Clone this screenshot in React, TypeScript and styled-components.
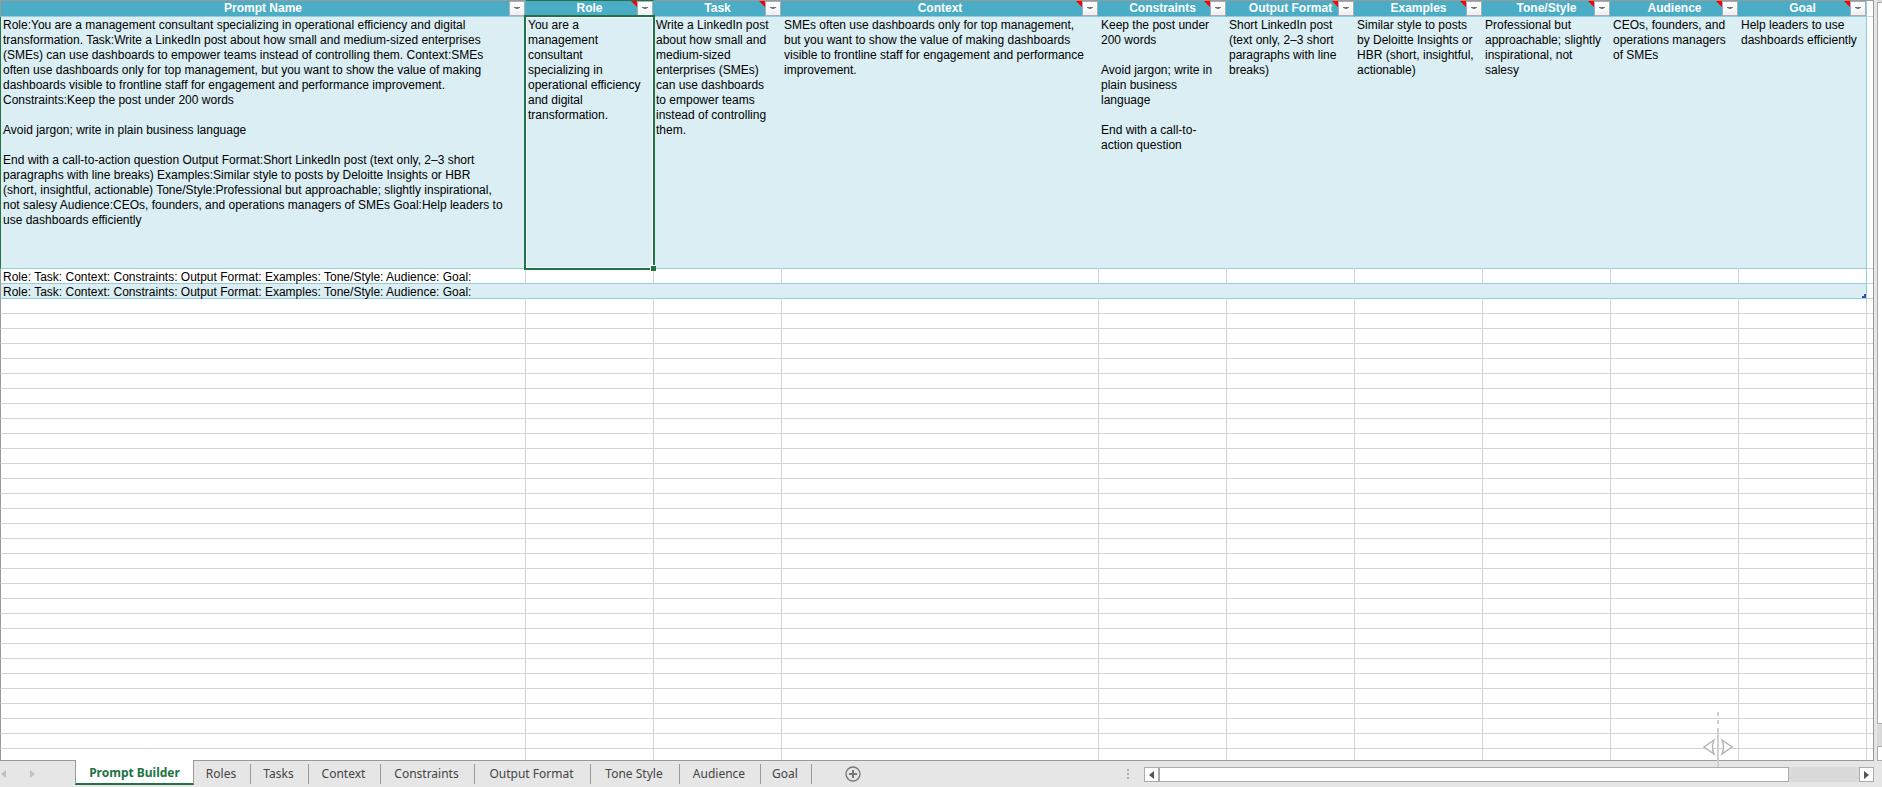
import React from "react";
import styled, { createGlobalStyle } from "styled-components";

const GlobalStyle = createGlobalStyle`
  * { box-sizing: border-box; }
  html, body { margin: 0; padding: 0; }
  body { overflow: hidden; background: #e6e6e6; }
`;

const Page = styled.div`
  display: flex;
  flex-direction: column;
  height: 100vh;
  background: #e6e6e6;
  font-family: "Liberation Sans", Arial, sans-serif;
`;

const Workspace = styled.main`
  position: relative;
  display: flex;
  flex: 1;
  min-height: 0;
`;

const Sheet = styled.div`
  flex: 1;
  min-width: 0;
  overflow: hidden;
  background: #fff;
  border: solid #999;
  border-width: 0 1px 1px 0;
`;

const Grid = styled.table`
  width: 100%;
  table-layout: fixed;
  border-collapse: separate;
  border-spacing: 0;
  font-size: 12px;
  line-height: 15px;
  color: #000;

  th:first-child,
  td:first-child {
    border-left: 1px solid #999;
  }

  tr:first-child td:first-child[data-active-row] {
    border-left-color: #217346;
  }
`;

const HeaderCell = styled.th<{ $selected?: boolean; $edge?: boolean }>`
  position: relative;
  height: 17px;
  padding: 0;
  line-height: 15px;
  font-weight: bold;
  text-align: center;
  color: #fff;
  background: #4bacc6;
  border-top: 1px solid ${(p) => (p.$selected ? "#217346" : "#999")};
  border-bottom: 1px solid #92cddc;
  border-right: 1px solid ${(p) => (p.$edge ? "#92cddc" : "#4bacc6")};
`;

const FilterButton = styled.button`
  position: absolute;
  right: 0;
  top: 0;
  display: flex;
  align-items: center;
  justify-content: center;
  width: 16px;
  height: 15px;
  padding: 0;
  background: linear-gradient(#fff, #eef0f4);
  border: 1px solid #a9adb5;
`;

const NoteMark = styled.svg`
  position: absolute;
  right: 16px;
  top: 0;
`;

type CellKind = "banded" | "plain" | "blank";

const Cell = styled.td<{ $kind: CellKind; $edge?: boolean }>`
  position: relative;
  height: 15px;
  padding: 0 0 0 2px;
  vertical-align: top;
  white-space: pre;
  line-height: 14px;
  background: ${(p) => (p.$kind === "banded" ? "#daeef3" : "#fff")};
  border-bottom: 1px solid ${(p) => (p.$kind === "blank" ? "#d4d4d4" : "#92cddc")};
  border-right: 1px solid
    ${(p) => (p.$edge ? "#92cddc" : p.$kind === "banded" ? "#daeef3" : "#d4d4d4")};
`;

const TallCell = styled(Cell)`
  height: 252px;
  padding-top: 1px;
  line-height: 15px;
`;

const SlimCell = styled(Cell)`
  padding-top: 2px;
  line-height: 12px;
`;

const RestCell = styled.td<{ $top?: boolean }>`
  padding: 0;
  border-top: ${(p) => (p.$top ? "1px solid #999" : "0")};
  border-bottom: 1px solid #d4d4d4;
`;

const Selection = styled.div`
  position: absolute;
  inset: -2px;
  border: 2px solid #217346;
  box-shadow: inset 0 0 0 1px #fff;
  pointer-events: none;
  z-index: 2;
`;

const FillHandle = styled.span`
  position: absolute;
  right: -3px;
  bottom: -3px;
  width: 6px;
  height: 6px;
  background: #217346;
  border-top: 1px solid #fff;
  border-left: 1px solid #fff;
`;

const TableCorner = styled.svg`
  position: absolute;
  right: 0;
  bottom: 0;
`;

const SplitCursor = styled.svg`
  position: absolute;
  right: 149px;
  bottom: -6px;
  z-index: 3;
  pointer-events: none;
`;

const VerticalBar = styled.div`
  display: flex;
  flex-direction: column;
  width: 5px;
  margin-left: 3px;
  padding-top: 2px;
  background: #dadada;
`;

const VerticalThumb = styled.div`
  flex: 1;
  background: #fff;
  border: 1px solid #ababab;
  border-right: 0;
`;

const DownButton = styled.button`
  height: 15px;
  margin-top: 22px;
  padding: 0;
  background: #fff;
  border: 1px solid #ababab;
  border-right: 0;
`;

const Footer = styled.footer`
  display: flex;
  height: 26px;
  padding-right: 8px;
  font-family: "Noto Sans", "Open Sans", sans-serif;
  font-size: 12px;
  color: #444;
`;

const TabArrows = styled.div`
  display: flex;
  align-items: center;
  width: 75px;
  gap: 24px;
  padding-left: 1px;
`;

const ArrowButton = styled.button`
  display: flex;
  padding: 0;
  border: 0;
  background: none;
`;

const Tabs = styled.nav`
  display: flex;
  align-items: flex-start;
`;

const ActiveTab = styled.button`
  width: 119px;
  height: 25px;
  margin-top: -1px;
  padding: 3px 0 0;
  font: bold 12px/20px "Noto Sans", "Open Sans", sans-serif;
  color: #217346;
  background: #fff;
  border: solid #999;
  border-width: 0 1px;
  border-bottom: 2px solid #217346;
  z-index: 1;
`;

const Tab = styled.button<{ $width: number }>`
  width: ${(p) => p.$width}px;
  height: 20px;
  margin-top: 3px;
  padding: 0 2px 0 0;
  font: 12px/20px "Noto Sans", "Open Sans", sans-serif;
  color: #444;
  background: none;
  border: 0;
  border-right: 1px solid #999;
`;

const AddButton = styled.button`
  display: flex;
  align-items: center;
  margin-left: 33px;
  padding: 0;
  border: 0;
  background: none;
`;

const Grip = styled.div`
  display: grid;
  align-content: center;
  gap: 2px;
  width: 2px;
  margin: 0 15px 0 auto;
`;

const GripDot = styled.span`
  width: 2px;
  height: 2px;
  background: #b0b0b0;
`;

const HorizontalBar = styled.div`
  display: flex;
  width: 730px;
  height: 15px;
  margin-top: 6px;
  background: #dadada;
`;

const ScrollButton = styled.button`
  display: flex;
  align-items: center;
  justify-content: center;
  width: 15px;
  padding: 0;
  background: #fff;
  border: 1px solid #ababab;
`;

const HorizontalThumb = styled.div`
  flex: 1;
  margin-right: 70px;
  background: #fff;
  border: 1px solid #ababab;
`;

const columns = [
  { name: "Prompt Name", width: 526, note: false },
  { name: "Role", width: 128, note: true },
  { name: "Task", width: 128, note: true },
  { name: "Context", width: 317, note: true },
  { name: "Constraints", width: 128, note: true },
  { name: "Output Format", width: 128, note: true },
  { name: "Examples", width: 128, note: true },
  { name: "Tone/Style", width: 128, note: true },
  { name: "Audience", width: 128, note: true },
  { name: "Goal", width: 128, note: true },
];

const firstPrompt = [
  `Role:You are a management consultant specializing in operational efficiency and digital
transformation. Task:Write a LinkedIn post about how small and medium-sized enterprises
(SMEs) can use dashboards to empower teams instead of controlling them. Context:SMEs
often use dashboards only for top management, but you want to show the value of making
dashboards visible to frontline staff for engagement and performance improvement.
Constraints:Keep the post under 200 words

Avoid jargon; write in plain business language

End with a call-to-action question Output Format:Short LinkedIn post (text only, 2–3 short
paragraphs with line breaks) Examples:Similar style to posts by Deloitte Insights or HBR
(short, insightful, actionable) Tone/Style:Professional but approachable; slightly inspirational,
not salesy Audience:CEOs, founders, and operations managers of SMEs Goal:Help leaders to
use dashboards efficiently`,
  `You are a
management
consultant
specializing in
operational efficiency
and digital
transformation.`,
  `Write a LinkedIn post
about how small and
medium-sized
enterprises (SMEs)
can use dashboards
to empower teams
instead of controlling
them.`,
  `SMEs often use dashboards only for top management,
but you want to show the value of making dashboards
visible to frontline staff for engagement and performance
improvement.`,
  `Keep the post under
200 words

Avoid jargon; write in
plain business
language

End with a call-to-
action question`,
  `Short LinkedIn post
(text only, 2–3 short
paragraphs with line
breaks)`,
  `Similar style to posts
by Deloitte Insights or
HBR (short, insightful,
actionable)`,
  `Professional but
approachable; slightly
inspirational, not
salesy`,
  `CEOs, founders, and
operations managers
of SMEs`,
  `Help leaders to use
dashboards efficiently`,
];

const emptyPrompt =
  "Role: Task: Context: Constraints: Output Format: Examples: Tone/Style: Audience: Goal:";

const tabs = [
  { name: "Roles", width: 57 },
  { name: "Tasks", width: 58 },
  { name: "Context", width: 72 },
  { name: "Constraints", width: 94 },
  { name: "Output Format", width: 116 },
  { name: "Tone Style", width: 89 },
  { name: "Audience", width: 81 },
  { name: "Goal", width: 51 },
];

const blankRows = Array.from({ length: 31 }, (_, i) => i);

function PromptTable() {
  const last = columns.length - 1;
  return (
    <Grid>
      <colgroup>
        {columns.map((c) => (
          <col key={c.name} width={c.width} />
        ))}
        <col />
      </colgroup>
      <thead>
        <tr>
          {columns.map((c, i) => (
            <HeaderCell
              key={c.name}
              scope="col"
              $selected={c.name === "Role"}
              $edge={i === last}
            >
              {c.name}
              {c.note && (
                <NoteMark width="6" height="6" viewBox="0 0 6 6">
                  <path d="M0 0H6V6Z" fill="#f00" />
                </NoteMark>
              )}
              <FilterButton aria-label={`Filter ${c.name}`}>
                <svg width="6" height="3" viewBox="0 0 6 3">
                  <path d="M0 0H6V1H5L4 2H2L1 1H0Z" fill="#777" />
                </svg>
              </FilterButton>
            </HeaderCell>
          ))}
          <RestCell $top />
        </tr>
      </thead>
      <tbody>
        <tr>
          {firstPrompt.map((text, i) => (
            <TallCell key={i} $kind="banded" $edge={i === last} data-active-row>
              {text}
              {i === 1 && (
                <Selection>
                  <FillHandle />
                </Selection>
              )}
            </TallCell>
          ))}
          <RestCell />
        </tr>
        {(["plain", "banded"] as CellKind[]).map((kind) => (
          <tr key={kind}>
            {columns.map((c, i) => (
              <SlimCell key={c.name} $kind={kind} $edge={i === last}>
                {i === 0 && emptyPrompt}
                {kind === "banded" && i === last && (
                  <TableCorner width="4" height="4" viewBox="0 0 4 4">
                    <path d="M2 0H4V4H0V2H2Z" fill="#3f51b0" />
                  </TableCorner>
                )}
              </SlimCell>
            ))}
            <RestCell />
          </tr>
        ))}
        {blankRows.map((r) => (
          <tr key={r}>
            {columns.map((c) => (
              <Cell key={c.name} $kind="blank" />
            ))}
            <RestCell />
          </tr>
        ))}
      </tbody>
    </Grid>
  );
}

export default function App() {
  return (
    <Page>
      <GlobalStyle />
      <Workspace>
        <Sheet>
          <PromptTable />
        </Sheet>
        <VerticalBar>
          <VerticalThumb />
          <DownButton aria-label="Scroll down" />
        </VerticalBar>
        <SplitCursor width="30" height="55" viewBox="0 0 30 55" fill="none">
          <path d="M15 0V4M15 8V12M15 16V55" stroke="#d0d0d0" strokeWidth="2" />
          <path
            d="M11 28L1 35L11 42Q8 35 11 28ZM19 28L29 35L19 42Q22 35 19 28Z"
            fill="#fff"
            stroke="#b4b4b4"
            strokeWidth="1.4"
          />
        </SplitCursor>
      </Workspace>
      <Footer>
        <TabArrows>
          <ArrowButton aria-label="Previous sheets">
            <svg width="5" height="8" viewBox="0 0 5 8">
              <path d="M5 0V8L0 4Z" fill="#c0c0c0" />
            </svg>
          </ArrowButton>
          <ArrowButton aria-label="Next sheets">
            <svg width="5" height="8" viewBox="0 0 5 8">
              <path d="M0 0V8L5 4Z" fill="#c0c0c0" />
            </svg>
          </ArrowButton>
        </TabArrows>
        <Tabs>
          <ActiveTab>Prompt Builder</ActiveTab>
          {tabs.map((t) => (
            <Tab key={t.name} $width={t.width}>
              {t.name}
            </Tab>
          ))}
        </Tabs>
        <AddButton aria-label="New sheet">
          <svg width="16" height="16" viewBox="0 0 16 16" fill="none">
            <circle cx="8" cy="8" r="7" stroke="#777" strokeWidth="1.3" />
            <path d="M8 4V12M4 8H12" stroke="#777" strokeWidth="2" />
          </svg>
        </AddButton>
        <Grip>
          <GripDot />
          <GripDot />
          <GripDot />
        </Grip>
        <HorizontalBar>
          <ScrollButton aria-label="Scroll left">
            <svg width="5" height="8" viewBox="0 0 5 8">
              <path d="M5 0V8L0 4Z" fill="#555" />
            </svg>
          </ScrollButton>
          <HorizontalThumb />
          <ScrollButton aria-label="Scroll right">
            <svg width="5" height="8" viewBox="0 0 5 8">
              <path d="M0 0V8L5 4Z" fill="#555" />
            </svg>
          </ScrollButton>
        </HorizontalBar>
      </Footer>
    </Page>
  );
}
